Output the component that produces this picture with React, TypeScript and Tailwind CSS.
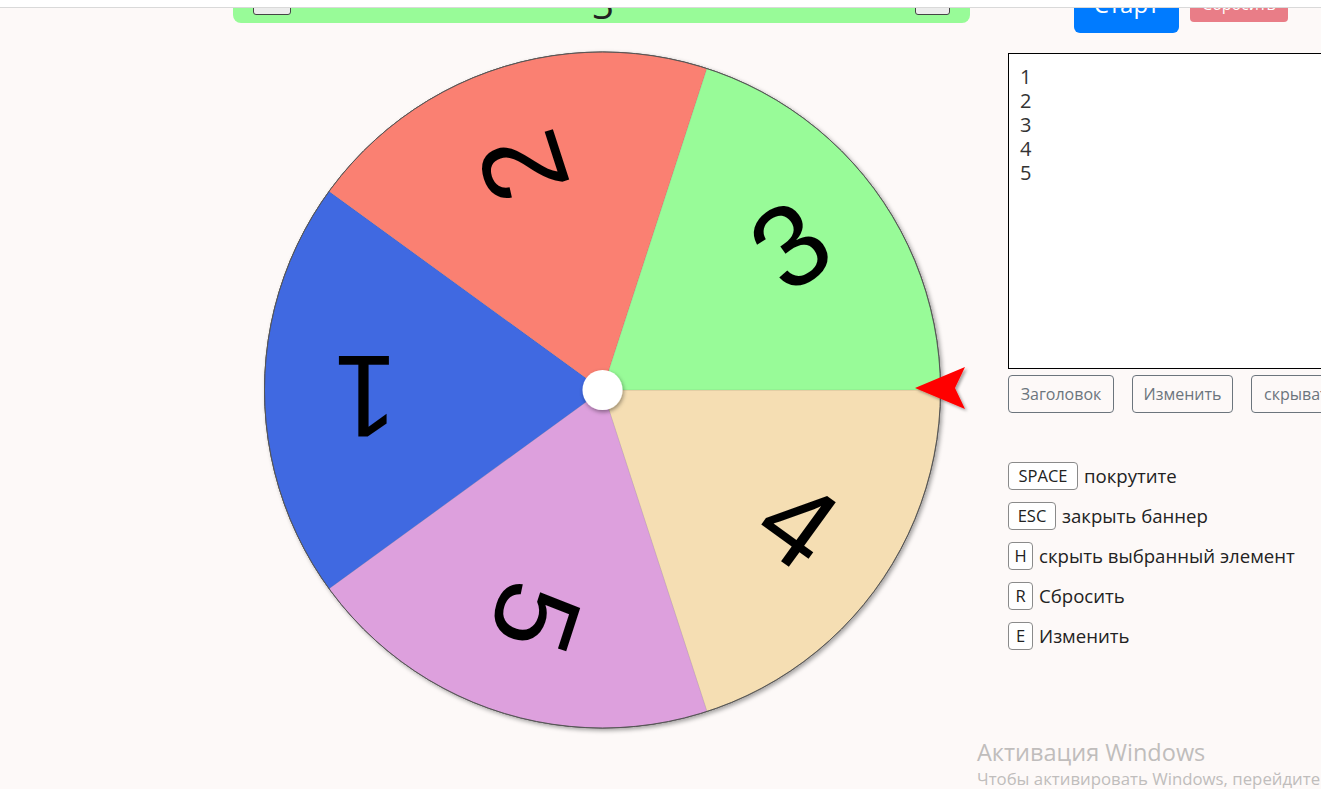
import React from "react";

const CX = 369.5;
const CY = 345;
const R = 338;
const FS = 116;

type Seg = { label: string; color: string; start: number };

const segs: Seg[] = [
  { label: "4", color: "#f5deb3", start: 0 },
  { label: "5", color: "#dda0dd", start: 72 },
  { label: "1", color: "#4169e1", start: 144 },
  { label: "2", color: "#fa8072", start: 216 },
  { label: "3", color: "#98fb98", start: 288 },
];

function rad(d: number) {
  return (d * Math.PI) / 180;
}

function segPath(a0: number, a1: number) {
  const x0 = CX + R * Math.cos(rad(a0));
  const y0 = CY + R * Math.sin(rad(a0));
  const x1 = CX + R * Math.cos(rad(a1));
  const y1 = CY + R * Math.sin(rad(a1));
  return `M ${CX} ${CY} L ${x0} ${y0} A ${R} ${R} 0 0 1 ${x1} ${y1} Z`;
}

function Wheel() {
  return (
    <svg width={737} height={700} viewBox="0 0 737 700" className="block">
      <defs>
        <filter id="wshadow" x="-10%" y="-10%" width="120%" height="120%">
          <feDropShadow dx="2" dy="2" stdDeviation="2" floodColor="#000" floodOpacity="0.35" />
        </filter>
        <filter id="hshadow" x="-50%" y="-50%" width="200%" height="200%">
          <feDropShadow dx="1" dy="2" stdDeviation="2" floodColor="#000" floodOpacity="0.4" />
        </filter>
        <filter id="pshadow" x="-50%" y="-50%" width="200%" height="200%">
          <feDropShadow dx="2" dy="2" stdDeviation="1.5" floodColor="#000" floodOpacity="0.35" />
        </filter>
      </defs>
      <g filter="url(#wshadow)">
        <circle cx={CX} cy={CY} r={R} fill="#ddd" stroke="#444" strokeWidth={1} />
        {segs.map((s) => (
          <path
            key={s.label}
            d={segPath(s.start, s.start + 72)}
            fill={s.color}
            stroke="rgba(0,0,0,0.12)"
            strokeWidth={0.6}
          />
        ))}
        <circle cx={CX} cy={CY} r={R} fill="none" stroke="#555" strokeWidth={1} />
      </g>
      {segs.map((s) => {
        const m = s.start + 36;
        const x = CX + 237 * Math.cos(rad(m));
        const y = CY + 237 * Math.sin(rad(m));
        return (
          <text
            key={"t" + s.label}
            x={x}
            y={y}
            dy={FS * 0.358 - 8}
            transform={`rotate(${m} ${x} ${y})`}
            textAnchor="middle"
            fontSize={FS}
            fontFamily="'Liberation Sans', Arial, sans-serif"
            fill="#000"
          >
            {s.label}
          </text>
        );
      })}
      <circle cx={CX} cy={CY} r={20} fill="#fff" filter="url(#hshadow)" />
      <polygon points="682,343 732,322 722,343 732,364" fill="#ff0000" filter="url(#pshadow)" />
    </svg>
  );
}

const keys: { k: string; label: string; w: string }[] = [
  { k: "SPACE", label: "покрутите", w: "w-[70px]" },
  { k: "ESC", label: "закрыть баннер", w: "w-[48px]" },
  { k: "H", label: "скрыть выбранный элемент", w: "w-[25px]" },
  { k: "R", label: "Сбросить", w: "w-[25px]" },
  { k: "E", label: "Изменить", w: "w-[25px]" },
];

export default function App() {
  return (
    <div
      className="flex h-[789px] w-[1321px] flex-col overflow-hidden bg-[#fdf9f8]"
      style={{ fontFamily: "'Open Sans', 'Noto Sans', sans-serif" }}
    >
      <div className="h-[8px] shrink-0 border-b border-[#d9d9d9] bg-white" />
      <div className="relative flex-1 overflow-hidden">
        <div className="-mt-[41px] flex w-max">
          <div className="w-[233px] shrink-0" />
          {/* center column */}
          <div className="flex w-[737px] shrink-0 flex-col">
            <div className="flex h-[56px] items-end justify-between rounded-[8px] bg-[#98fb98] px-[20px]">
              <div className="mb-[8px] h-[30px] w-[38px] rounded-[3px] border border-[#444] bg-[#ececec]" />
              <div className="mb-[0px] text-[38px] leading-[38px] text-[#222]">3</div>
              <div className="mb-[8px] h-[30px] w-[35px] rounded-[3px] border border-[#444] bg-[#ececec]" />
            </div>
            <div className="mt-[22px]">
              <Wheel />
            </div>
          </div>
          {/* right column */}
          <div className="ml-[38px] flex w-[340px] shrink-0 flex-col">
            <div className="flex items-start">
              <button className="ml-[66px] mt-[10px] flex h-[56px] w-[105px] items-center justify-center rounded-[6px] bg-[#007bff] pb-[3px] text-[24px] text-white">
                Старт
              </button>
              <div className="ml-[11px] mt-[14px] h-[41px] w-[98px] rounded-[4px] bg-[#e97d87] pt-[13px] text-center text-[16px] leading-[20px] text-white">
                Сбросить
              </div>
            </div>
            <textarea
              readOnly
              defaultValue={"1\n2\n3\n4\n5"}
              className="mt-[20px] h-[316px] w-[340px] resize-none border border-black bg-white px-[11px] pt-[11px] text-[20px] leading-[24px] text-[#333] outline-none"
              style={{ fontFamily: "'Open Sans', 'Noto Sans', sans-serif" }}
            />
            <div className="mt-[6px] flex gap-[18px]">
              <button className="h-[38px] w-[106px] shrink-0 rounded-[4px] border border-[#6c757d] text-[16px] text-[#6c757d]">
                Заголовок
              </button>
              <button className="h-[38px] w-[101px] shrink-0 rounded-[4px] border border-[#6c757d] text-[16px] text-[#6c757d]">
                Изменить
              </button>
              <button className="h-[38px] w-[110px] shrink-0 overflow-hidden whitespace-nowrap rounded-[4px] border border-[#6c757d] px-[12px] text-left text-[16px] text-[#6c757d]">
                скрывать
              </button>
            </div>
            <div className="mt-[49px] flex flex-col gap-[12px]">
              {keys.map((r) => (
                <div key={r.k} className="flex h-[28px] items-center">
                  <span
                    className={`flex h-[28px] ${r.w} shrink-0 items-center justify-center rounded-[4px] border border-[#8a8a8a] bg-white text-[16.5px] text-[#222]`}
                  >
                    {r.k}
                  </span>
                  <span className="ml-[6px] whitespace-nowrap text-[18.6px] text-[#222]">{r.label}</span>
                </div>
              ))}
            </div>
          </div>
        </div>
        <div className="absolute left-[977px] top-[729px] whitespace-nowrap text-[#c0bdbc]">
          <div className="text-[23.5px] leading-[30px]">Активация Windows</div>
          <div className="text-[16.8px] leading-[24px]">Чтобы активировать Windows, перейдите</div>
        </div>
      </div>
    </div>
  );
}
